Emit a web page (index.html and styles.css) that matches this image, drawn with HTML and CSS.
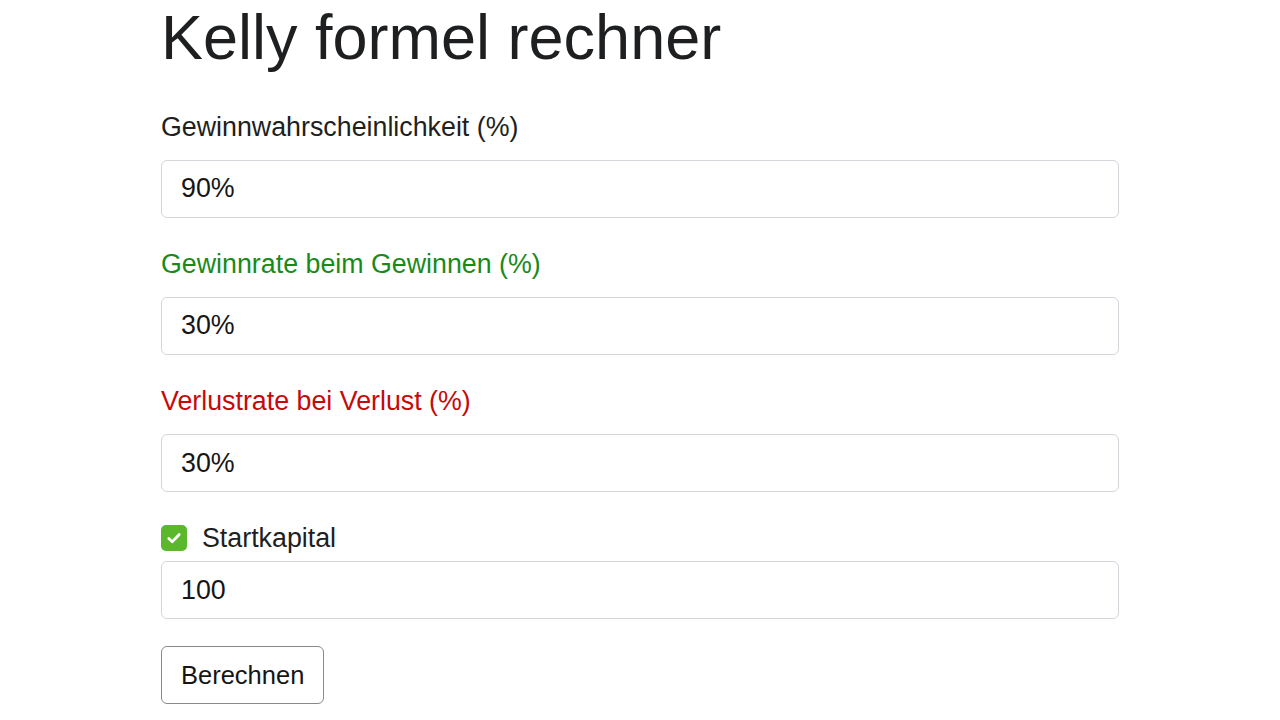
FILE: index.html
```html
<!DOCTYPE html>
<html lang="de">
<head>
  <meta charset="UTF-8" />
  <title>Kelly formel rechner</title>
  <link rel="stylesheet" href="styles.css">
</head>
<body>

  <div class="container">
    <h1>Kelly formel rechner</h1>

    <form class="calc">
      <div class="form-group">
        <label for="p">Gewinnwahrscheinlichkeit (%)</label>
        <input class="form-control" id="p" type="text" value="90%">
      </div>

      <div class="form-group">
        <label for="b" class="win">Gewinnrate beim Gewinnen (%)</label>
        <input class="form-control" id="b" type="text" value="30%">
      </div>

      <div class="form-group">
        <label for="a" class="loss">Verlustrate bei Verlust (%)</label>
        <input class="form-control" id="a" type="text" value="30%">
      </div>

      <div class="form-group">
        <div class="check">
          <span class="check-box">
            <svg width="20" height="20" viewBox="0 0 16 16">
              <path d="M3.8 8.4 L6.6 11 L12.2 5.2" fill="none" stroke="#fff" stroke-width="2.2" stroke-linecap="round" stroke-linejoin="round"/>
            </svg>
          </span>
          <label for="c">Startkapital</label>
        </div>
        <input class="form-control" id="c" type="text" value="100">
      </div>

      <button type="button" class="btn">Berechnen</button>
    </form>
  </div>

</body>
</html>
```

FILE: styles.css
```css
body {
  margin: 0;
  font-family: "Liberation Sans", Arial, sans-serif;
  font-size: 26.8px;
  line-height: 1.5;
  color: #1d1f21;
  background: #fff;
}

.container {
  width: 958px;
  margin-left: 161px;
}

h1 {
  margin: 0 0 31px;
  font-size: 63px;
  font-weight: 400;
  line-height: 1.2;
}

.form-group {
  margin-bottom: 26px;
}

.form-group label {
  display: block;
  margin-bottom: 13px;
}

.win {
  color: #198a19;
}

.loss {
  color: #c50a0a;
}

.form-control {
  display: block;
  box-sizing: border-box;
  width: 100%;
  height: 58px;
  padding: 0 19px;
  font: inherit;
  color: #161616;
  background: #fff;
  border: 1px solid #d3d6da;
  border-radius: 6px;
}

.check {
  display: flex;
  align-items: center;
  gap: 15px;
  margin-bottom: 3px;
}

.check label {
  margin-bottom: 0;
}

.check-box {
  width: 26px;
  height: 26px;
  border-radius: 5px;
  background: #5bb82c;
  display: flex;
  align-items: center;
  justify-content: center;
}

.btn {
  box-sizing: border-box;
  height: 58px;
  padding: 0 19px;
  font: inherit;
  font-size: 25.5px;
  color: #161616;
  background: #fff;
  border: 1px solid #8a8a8a;
  border-radius: 6px;
  margin-top: 1px;
}
```
